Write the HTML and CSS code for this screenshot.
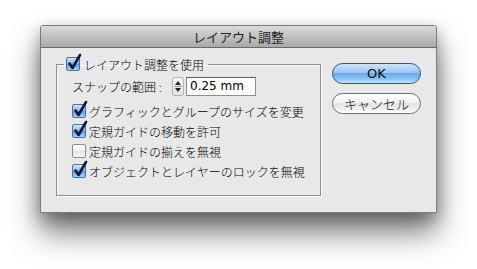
FILE: index.html
```html
<!DOCTYPE html>
<html lang="ja">
<head>
<meta charset="utf-8">
<title>レイアウト調整</title>
<link rel="stylesheet" href="styles.css">
</head>
<body>
<div class="stage">
<div class="window">
  <div class="titlebar">レイアウト調整</div>
  <div class="content">
    <fieldset class="group">
      <legend class="legend">
        <span class="cb checked"><svg class="tick" viewBox="0 0 16 18" width="16" height="18"><path d="M3.5 10.5 L6.5 15 L14 2" fill="none" stroke="#161a3a" stroke-width="2.6" stroke-linecap="round" stroke-linejoin="round"/></svg></span>
        <span class="ltext">レイアウト調整を使用</span>
      </legend>
      <div class="row snap">
        <span class="snaplabel">スナップの範囲 :</span>
        <span class="stepper">
          <svg viewBox="0 0 12 19" width="12" height="19">
            <path d="M3 8 L6 4 L9 8 Z" fill="#222"/>
            <path d="M2 9.5 H10" stroke="#9a9a9a" stroke-width="1"/>
            <path d="M3 11 L6 15 L9 11 Z" fill="#222"/>
          </svg>
        </span>
        <span class="field">0.25 mm</span>
      </div>
      <div class="row">
        <span class="cb checked"><svg class="tick" viewBox="0 0 16 18" width="16" height="18"><path d="M3.5 10.5 L6.5 15 L14 2" fill="none" stroke="#161a3a" stroke-width="2.6" stroke-linecap="round" stroke-linejoin="round"/></svg></span>
        <span>グラフィックとグループのサイズを変更</span>
      </div>
      <div class="row">
        <span class="cb checked"><svg class="tick" viewBox="0 0 16 18" width="16" height="18"><path d="M3.5 10.5 L6.5 15 L14 2" fill="none" stroke="#161a3a" stroke-width="2.6" stroke-linecap="round" stroke-linejoin="round"/></svg></span>
        <span>定規ガイドの移動を許可</span>
      </div>
      <div class="row">
        <span class="cb"></span>
        <span>定規ガイドの揃えを無視</span>
      </div>
      <div class="row">
        <span class="cb checked"><svg class="tick" viewBox="0 0 16 18" width="16" height="18"><path d="M3.5 10.5 L6.5 15 L14 2" fill="none" stroke="#161a3a" stroke-width="2.6" stroke-linecap="round" stroke-linejoin="round"/></svg></span>
        <span>オブジェクトとレイヤーのロックを無視</span>
      </div>
    </fieldset>
    <div class="buttons">
      <div class="btn ok">OK</div>
      <div class="btn cancel">キャンセル</div>
    </div>
  </div>
</div>
</div>
</body>
</html>
```

FILE: styles.css
```css
html, body {
  margin: 0;
  padding: 0;
  background: #ffffff;
}

body {
  font-family: "Noto Sans CJK JP", "DejaVu Sans", sans-serif;
  font-size: 12px;
  font-weight: 300;
  color: #000;
}

.stage {
  width: 477px;
  height: 269px;
  padding: 25px 0 0 40px;
  box-sizing: border-box;
  overflow: hidden;
}

.window {
  width: 397px;
  box-sizing: border-box;
  border: 1px solid #7c7c7c;
  border-radius: 3px 3px 0 0;
  background: #e8e8e8;
  box-shadow: 0 20px 30px rgba(0, 0, 0, 0.5), 0 6px 16px rgba(0, 0, 0, 0.3);
}

.titlebar {
  height: 21px;
  line-height: 21px;
  text-align: center;
  font-size: 13px;
  font-weight: 400;
  color: #1e1e1e;
  background: linear-gradient(#dadada, #c2c2c2 50%, #a8a8a8);
  border-bottom: 1px solid #6a6a6a;
  border-radius: 2px 2px 0 0;
}

.content {
  display: flex;
  align-items: flex-start;
  padding: 7px 15px 16px 15px;
  gap: 11px;
}

.group {
  margin: 0;
  width: 265px;
  min-width: 0;
  box-sizing: border-box;
  padding: 0 0 14px 15px;
  border: 1px solid #8c8c8c;
  box-shadow: 1px 1px 0 #fbfbfb, inset 1px 1px 0 #fbfbfb;
}

.legend {
  display: flex;
  align-items: center;
  height: 18px;
  padding: 0 4px 0 2px;
  margin-left: -8px;
}

.ltext {
  margin-left: 4px;
}

.row {
  display: flex;
  align-items: center;
  height: 20px;
  white-space: nowrap;
}

.row .cb {
  margin-right: 4px;
}

.snap {
  margin-top: 3px;
  margin-bottom: 5px;
}

.snaplabel {
  width: 100px;
}

.stepper {
  display: flex;
  width: 12px;
  height: 19px;
  box-sizing: border-box;
  border-radius: 3px;
  background: linear-gradient(#fafafa, #e2e2e2);
  box-shadow: inset 0 0 0 1px #b4b4b4;
}

.field {
  margin-left: 2px;
  width: 70px;
  height: 19px;
  box-sizing: border-box;
  border: 1px solid #8e8e8e;
  border-top-color: #5e5e5e;
  background: #fff;
  font-family: "DejaVu Sans", sans-serif;
  font-weight: 400;
  font-size: 12px;
  line-height: 17px;
  padding-left: 3px;
}

.cb {
  position: relative;
  display: inline-block;
  flex: none;
  width: 14px;
  height: 14px;
  box-sizing: border-box;
  border-radius: 2px;
  border: 1px solid #8e8e8e;
  background: linear-gradient(#ffffff, #f0f0f0 50%, #e4e4e4 50%, #f6f6f6);
}

.row .cb {
  margin-right: 3px;
}

.cb.checked {
  border-color: #4d6e9e;
  background: linear-gradient(#d3e6fa, #86b6ea 48%, #5c9be3 52%, #a8d3fb);
}

.tick {
  position: absolute;
  left: -1px;
  top: -5px;
}

.buttons {
  display: flex;
  flex-direction: column;
  gap: 9px;
  margin-top: 8px;
  width: 89px;
}

.btn {
  height: 21px;
  box-sizing: border-box;
  border-radius: 11px;
  text-align: center;
  line-height: 19px;
  font-size: 13px;
}

.ok {
  font-family: "DejaVu Sans", sans-serif;
  font-weight: 400;
  border: 1px solid #2f4f8c;
  color: #0a0a0a;
  background: linear-gradient(#cfe3f8, #9cc6f2 45%, #6aa9ec 50%, #8cc3f6 80%, #c4e6fe);
}

.cancel {
  border: 1px solid #6e6e6e;
  color: #111;
  background: linear-gradient(#ffffff, #f2f2f2 45%, #e2e2e2 50%, #f0f0f0 80%, #ffffff);
}
```
